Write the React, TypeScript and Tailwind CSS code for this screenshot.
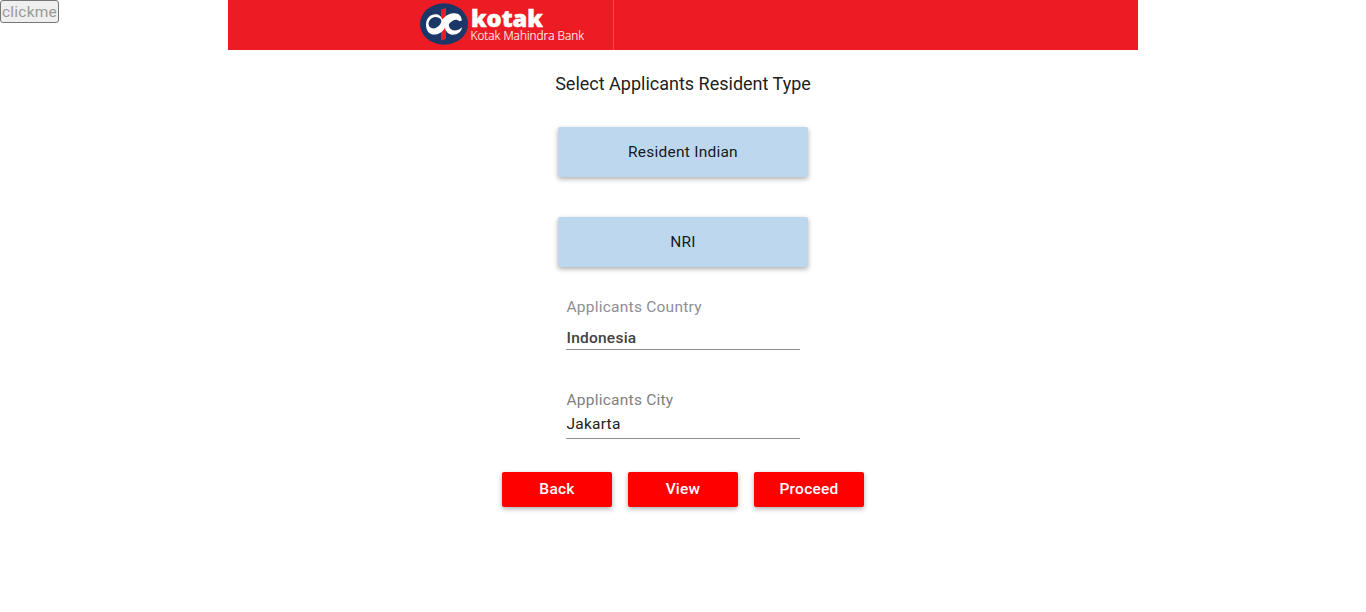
function Logo() {
  return (
    <svg width="170" height="50" viewBox="418 0 170 50" className="block">
      <ellipse cx="444" cy="24" rx="24" ry="20.7" fill="#1b3768" />
      <path d="M441 9.5L446 8V39L441 40.5Z" fill="#ed1c24" />
      <path
        d="M426 24.5C426 18 430.5 14.2 435.5 14.2C438.5 14.2 441 15.5 442.3 19.5C446 15 450 13.2 454.5 13.2C459 13.2 461.6 16 461.8 20.5L459.5 21.3C456.5 18.5 452.5 19.5 448.8 24.3C449 28.5 451.5 30.5 454.5 30.5C457.5 30.5 459.5 29.5 462 27.3C461.5 32 457.5 34.8 453 34.8C449 34.8 446.5 32.5 444.8 28C442 32.8 438 34.6 434 34.6C429 34.6 426 30.5 426 24.5ZM428.5 23.8C428.8 28.6 433.5 29.5 437 27.2C440 25.2 442 22.2 441 19.4C438 15.3 429.5 16 428.5 23.8Z"
        fill="#fff"
        fillRule="evenodd"
      />
      <text x="471" y="26.5" fontSize="22.5" fontWeight="800" textLength="72" lengthAdjust="spacingAndGlyphs" fill="#fff" stroke="#fff" strokeWidth="0.5" fontFamily="Open Sans, Noto Sans, sans-serif">kotak</text>
      <text x="470.5" y="40" fontSize="12" fontWeight="300" textLength="113.5" lengthAdjust="spacingAndGlyphs" fill="#fff" stroke="#fff" strokeWidth="0.15" fontFamily="Open Sans, Noto Sans, sans-serif">Kotak Mahindra Bank</text>
    </svg>
  );
}

const raised = "rounded-[2px] shadow-[0_2px_5px_0_rgba(0,0,0,0.32)]";

export default function App() {
  return (
    <div className="grid h-[612px] grid-cols-[228px_910px_1fr] bg-white font-['Roboto',sans-serif] text-[15.5px] tracking-[0.24px] text-[#212121]">
      <div>
        <button disabled className="block h-[23px] w-[59px] rounded-[3px] border border-[#767676] bg-[#efefef] pt-px leading-[20px] text-[#999]">clickme</button>
      </div>
      <main className="flex flex-col items-center">
        <header className="flex h-[50px] w-full bg-[#ed1c24] pl-[190px] tracking-normal">
          <div className="w-[196px] border-r border-[#f14950]"><Logo /></div>
        </header>
        <h1 className="mt-5 text-[18px] leading-7 tracking-normal text-black/90">Select Applicants Resident Type</h1>
        <button className={`mt-[29px] h-[50px] w-[250px] bg-[#bdd7ee] pt-0.5 text-black/90 ${raised}`}>Resident Indian</button>
        <button className={`mt-10 h-[50px] w-[250px] bg-[#bdd7ee] pt-0.5 text-black/90 ${raised}`}>NRI</button>
        <div className="mt-7 h-[55px] w-[234px] border-b border-[#8e8e93] pl-[0.5px]">
          <div className="leading-6 text-[#8e8e93]">Applicants Country</div>
          <div className="mt-[7px] font-medium leading-6 text-[#424242]">Indonesia</div>
        </div>
        <div className="mt-[38px] h-[51px] w-[234px] border-b border-[#8e8e93] pl-[0.5px]">
          <div className="leading-6 text-[#808080]">Applicants City</div>
          <div className="leading-6">Jakarta</div>
        </div>
        <div className="mt-[33px] flex gap-4 font-medium text-white">
          <button className={`h-[35px] w-[110px] bg-[#f00] pt-px ${raised}`}>Back</button>
          <button className={`h-[35px] w-[110px] bg-[#f00] pt-px ${raised}`}>View</button>
          <button className={`h-[35px] w-[110px] bg-[#f00] pt-px ${raised}`}>Proceed</button>
        </div>
      </main>
    </div>
  );
}
